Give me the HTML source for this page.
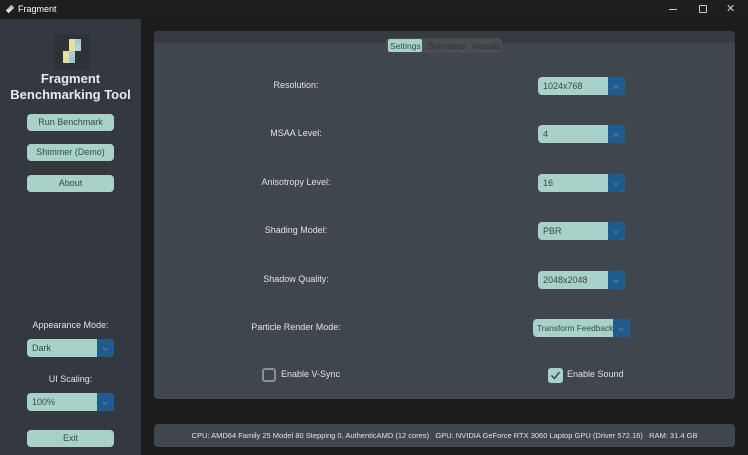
<!DOCTYPE html>
<html><head><style>
*{margin:0;padding:0;box-sizing:border-box}
body{width:748px;height:455px;background:#1c1c1c;font-family:"Liberation Sans",sans-serif;position:relative;overflow:hidden;color:#dce4e6}
.a{position:absolute}
.btn{position:absolute;background:#a8d1c9;border-radius:4px;color:#3a4a48;font-size:9px;text-align:center;line-height:17px;height:17px;width:87px;left:27px}
.dd{position:absolute;height:18px;border-radius:4px;background:#a8d1c9;overflow:hidden;font-size:9px;color:#3a4a48;line-height:18px;padding-left:5px;white-space:nowrap}
.dd i{position:absolute;right:0;top:0;bottom:0;width:17px;background:#1f5b8c}
.dd i:after{content:"";position:absolute;left:6px;top:7px;width:3px;height:3px;border-right:1px solid #4d7fa8;border-bottom:1px solid #4d7fa8;transform:rotate(45deg)}
.lbl{position:absolute;font-size:9px;color:#dce4e6;text-align:center}
</style></head><body>
<div class="a" style="left:0;top:0;width:748px;height:19px;background:#1e1e1e"></div>
<div class="a" style="left:6px;top:5px;width:8px;height:8px;background:linear-gradient(45deg,#e8e3a8 50%,#9cc7cf 50%);transform:rotate(-45deg) scaleY(.5)"></div>
<div class="a" style="left:18px;top:4px;font-size:9px;color:#fff">Fragment</div>
<div class="a" style="left:669px;top:9px;width:8px;height:1px;background:#ccc"></div>
<div class="a" style="left:699px;top:5px;width:8px;height:8px;border:1px solid #ccc;border-radius:1px"></div>
<div class="a" style="left:726px;top:2px;font-size:11px;color:#ccc">✕</div>
<div class="a" style="left:0;top:19px;width:141px;height:436px;background:#343940"></div>
<svg class="a" style="left:54px;top:34px" width="36" height="36">
<rect width="36" height="36" fill="#2d3238"/>
<rect x="15" y="5" width="6" height="6" fill="#e6e2a0"/><rect x="21" y="5" width="6" height="6" fill="#a6cdd0"/>
<rect x="15" y="11" width="6" height="6" fill="#dfe0a8"/><rect x="21" y="11" width="6" height="6" fill="#b8d6c8"/>
<rect x="9" y="17" width="6" height="6" fill="#e8e2a0"/><rect x="15" y="17" width="6" height="6" fill="#a9cfcf"/>
<rect x="9" y="23" width="6" height="6" fill="#dedfa2"/><rect x="15" y="23" width="6" height="6" fill="#9ec8cf"/>
</svg>
<div class="a" style="left:0;width:141px;top:71px;text-align:center;font-size:13px;line-height:16px;color:#e8eaeb;font-weight:bold">Fragment<br>Benchmarking Tool</div>
<div class="btn" style="top:114px">Run Benchmark</div>
<div class="btn" style="top:144px">Shimmer (Demo)</div>
<div class="btn" style="top:175px">About</div>
<div class="lbl" style="left:0;width:141px;top:320px">Appearance Mode:</div>
<div class="dd" style="left:27px;top:339px;width:87px">Dark<i></i></div>
<div class="lbl" style="left:0;width:141px;top:374px">UI Scaling:</div>
<div class="dd" style="left:27px;top:393px;width:87px">100%<i></i></div>
<div class="btn" style="top:430px">Exit</div>
<div class="a" style="left:154px;top:31px;width:581px;height:368px;background:#40464d;border-radius:4px"></div>
<div class="a" style="left:154px;top:31px;width:581px;height:12px;background:#363b42;border-radius:4px 4px 0 0"></div>
<div class="a" style="left:386px;top:38px;width:116px;height:15px;background:#4a4d50;border-radius:4px"></div>
<div class="a" style="left:388px;top:39px;width:34px;height:13px;background:#a8d1c9;border-radius:2px"></div>
<div class="a" style="left:390px;top:41px;font-size:8.5px;color:#3a4a48">Settings</div>
<div class="a" style="left:428px;top:41px;font-size:8.5px;color:#2c3135">Scenarios</div>
<div class="a" style="left:472px;top:41px;font-size:8.5px;color:#2c3135">Results</div>
<div class="lbl" style="left:196px;width:200px;top:80px">Resolution:</div>
<div class="dd" style="left:538px;top:77px;width:87px">1024x768<i></i></div>
<div class="lbl" style="left:196px;width:200px;top:128px">MSAA Level:</div>
<div class="dd" style="left:538px;top:125px;width:87px">4<i></i></div>
<div class="lbl" style="left:196px;width:200px;top:177px">Anisotropy Level:</div>
<div class="dd" style="left:538px;top:174px;width:87px">16<i></i></div>
<div class="lbl" style="left:196px;width:200px;top:225px">Shading Model:</div>
<div class="dd" style="left:538px;top:222px;width:87px">PBR<i></i></div>
<div class="lbl" style="left:196px;width:200px;top:274px">Shadow Quality:</div>
<div class="dd" style="left:538px;top:271px;width:87px">2048x2048<i></i></div>
<div class="lbl" style="left:196px;width:200px;top:322px">Particle Render Mode:</div>
<div class="dd" style="left:533px;top:319px;width:97px;font-size:8.3px;padding-left:4px">Transform Feedback<i></i></div>
<div class="a" style="left:262px;top:368px;width:14px;height:14px;border:2px solid #8a9196;border-radius:3px"></div>
<div class="lbl" style="left:281px;top:369px">Enable V-Sync</div>
<div class="a" style="left:548px;top:368px;width:15px;height:15px;background:#a8d1c9;border-radius:3px"></div>
<svg class="a" style="left:548px;top:368px" width="15" height="15"><path d="M3.5 7.5 L6.5 10.5 L11.5 4" stroke="#3a4a48" stroke-width="1.5" fill="none"/></svg>
<div class="lbl" style="left:567px;top:369px">Enable Sound</div>
<div class="a" style="left:154px;top:424px;width:581px;height:23px;background:#40464d;border-radius:4px"></div>
<div class="a" style="left:154px;width:581px;top:431px;font-size:7.5px;text-align:center;color:#dce4e6;white-space:nowrap">CPU: AMD64 Family 25 Model 80 Stepping 0, AuthenticAMD (12 cores) &nbsp;&nbsp;GPU: NVIDIA GeForce RTX 3060 Laptop GPU (Driver 572.16) &nbsp;&nbsp;RAM: 31.4 GB</div>
</body></html>
